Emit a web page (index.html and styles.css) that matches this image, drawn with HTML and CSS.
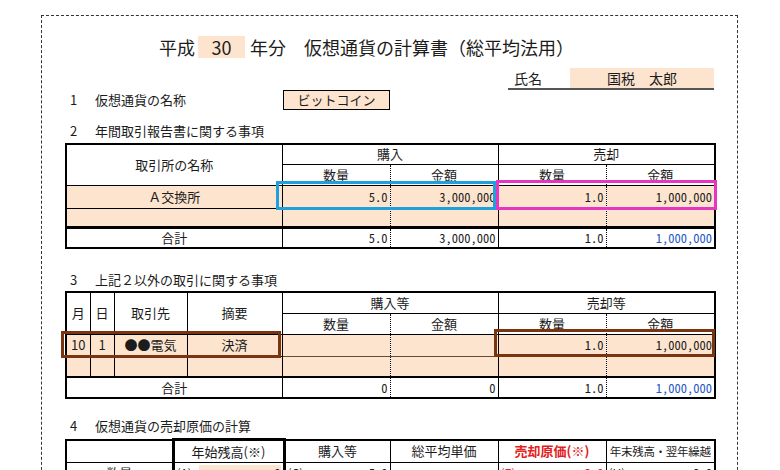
FILE: index.html
```html
<!DOCTYPE html>
<html lang="ja">
<head>
<meta charset="utf-8">
<title>仮想通貨の計算書</title>
<link rel="stylesheet" href="styles.css">
</head>
<body>
<div class="sheet">
  <h1 class="title"><span>平成</span><span class="yr">30</span><span>年分</span><span class="main">仮想通貨の計算書（総平均法用）</span></h1>

  <div class="name-row">
    <div class="name-box"><span class="name-label">氏名</span><span class="name-val">国税　太郎</span></div>
  </div>

  <div class="sec1"><span class="num">1</span><span>仮想通貨の名称</span><span class="coin">ビットコイン</span></div>

  <div class="sec-label s2"><span class="num">2</span><span>年間取引報告書に関する事項</span></div>
  <div class="tbl-wrap w2">
    <table class="grid t2">
      <colgroup><col class="c216"><col class="c108"><col class="c108"><col class="c108"><col class="c109"></colgroup>
      <tr class="h1"><th rowspan="2">取引所の名称</th><th colspan="2">購入</th><th colspan="2">売却</th></tr>
      <tr class="h2"><th class="qty">数量</th><th class="amt">金額</th><th class="qty">数量</th><th class="amt">金額</th></tr>
      <tr class="fill rd"><td>Ａ交換所</td><td class="n qty">5.0</td><td class="n amt">3,000,000</td><td class="n qty">1.0</td><td class="n amt">1,000,000</td></tr>
      <tr class="fill re"><td></td><td class="qty"></td><td class="amt"></td><td class="qty"></td><td class="amt"></td></tr>
      <tr class="rt"><td>合計</td><td class="n qty">5.0</td><td class="n amt">3,000,000</td><td class="n qty">1.0</td><td class="n amt blue">1,000,000</td></tr>
    </table>
    <div class="hl hl-blue"></div>
    <div class="hl hl-pink"></div>
  </div>

  <div class="sec-label s3"><span class="num">3</span><span>上記２以外の取引に関する事項</span></div>
  <div class="tbl-wrap w3">
    <table class="grid t3">
      <colgroup><col class="c24"><col class="c24"><col class="c73"><col class="c95"><col class="c108"><col class="c108"><col class="c108"><col class="c109"></colgroup>
      <tr class="h1"><th rowspan="2">月</th><th rowspan="2">日</th><th rowspan="2">取引先</th><th rowspan="2">摘要</th><th colspan="2">購入等</th><th colspan="2">売却等</th></tr>
      <tr class="h2"><th class="qty">数量</th><th class="amt">金額</th><th class="qty">数量</th><th class="amt">金額</th></tr>
      <tr class="fill rd"><td>10</td><td>1</td><td>●●電気</td><td>決済</td><td class="qty buy"></td><td class="amt buy"></td><td class="n qty">1.0</td><td class="n amt">1,000,000</td></tr>
      <tr class="fill re"><td></td><td></td><td></td><td></td><td class="qty"></td><td class="amt"></td><td class="qty"></td><td class="amt"></td></tr>
      <tr class="rt"><td colspan="4">合計</td><td class="n qty">0</td><td class="n amt">0</td><td class="n qty">1.0</td><td class="n amt blue">1,000,000</td></tr>
    </table>
    <div class="hl hl-brown-l"></div>
    <div class="hl hl-brown-r"></div>
  </div>

  <div class="sec-label s4"><span class="num">4</span><span>仮想通貨の売却原価の計算</span></div>
  <div class="tbl-wrap w4">
    <table class="grid t4">
      <colgroup><col class="c107"><col class="c111"><col class="c106"><col class="c108"><col class="c108"><col class="c109"></colgroup>
      <tr class="h1"><th></th><th class="box">年始残高(※)</th><th>購入等</th><th>総平均単価</th><th class="red">売却原価(※)</th><th class="tiny">年末残高・翌年繰越</th></tr>
      <tr class="r2">
        <td>数量</td>
        <td class="box"><div class="cf"><span class="lbl">(A)</span><span class="val pv">0</span></div></td>
        <td><div class="cf"><span class="lbl">(C)</span><span class="val">5.0</span></div></td>
        <td></td>
        <td><div class="cf redc"><span class="lbl">(E)</span><span class="val bold">3.0</span></div></td>
        <td><div class="cf"><span class="lbl">(H)</span><span class="val">3.0</span></div></td>
      </tr>
    </table>
  </div>
</div>
</body>
</html>
```

FILE: styles.css
```css
* { box-sizing: border-box; }
html, body { margin: 0; padding: 0; background: #fff; }
body {
  font-family: "Noto Sans CJK JP", "Noto Sans", sans-serif;
  color: #1c1c1c;
  font-size: 13px;
  overflow: hidden;
}
.sheet {
  margin: 15px 0 0 41px;
  width: 697px;
  height: 480px;
  border: 1px dashed #333;
  padding: 0 23px;
}
.title {
  margin: 20px 0 0;
  padding-left: 94px;
  height: 22px;
  display: flex;
  align-items: center;
  font-size: 18px;
  font-weight: 400;
  line-height: 22px;
}
.yr {
  width: 47px;
  height: 22px;
  background: #fce4cf;
  text-align: center;
  margin: 0 5px 0 3px;
}
.main { margin-left: 18px; }

.name-row { display: flex; justify-content: flex-end; margin-top: 10px; }
.name-box {
  display: flex;
  width: 206px;
  height: 22px;
  border-bottom: 2px solid #555;
  font-size: 14px;
  line-height: 20px;
}
.name-label { width: 62px; padding-left: 6px; }
.name-val { flex: 1; background: #fce4cf; text-align: center; height: 20px; }

.sec1 {
  display: grid;
  grid-template-columns: 30px 188px 107px;
  height: 20px;
  line-height: 20px;
  align-items: center;
}
.sec1 .num { padding-left: 5px; }
.coin {
  border: 1px solid #000;
  background: #fce4cf;
  text-align: center;
  height: 20px;
  line-height: 18px;
}

.sec-label { display: flex; height: 18px; line-height: 18px; padding-left: 5px; }
.sec-label .num { width: 25px; }
.s2 { margin-top: 12px; }
.s3 { margin-top: 22px; }
.s4 { margin-top: 18px; }

.tbl-wrap { position: relative; }
.w2 { margin-top: 3px; }
.w3 { margin-top: 2px; }
.w4 { margin-top: 3px; }

.grid {
  border-collapse: collapse;
  table-layout: fixed;
  width: 649px;
  border: 2px solid #000;
}
.grid th, .grid td {
  border: 1px solid #000;
  padding: 0 2px;
  font-weight: 400;
  text-align: center;
  font-size: 13px;
  line-height: 16px;
  white-space: nowrap;
  overflow: hidden;
}
.grid .n {
  text-align: right;
  font-family: "Noto Sans Mono CJK JP", "Liberation Mono", monospace;
  font-size: 12.5px;
}
.grid .qty { border-right: 1px dotted #000; }
.grid .amt { border-left: 1px dotted #000; }
.fill td { background: #fce4cf; }
.rt td { border-top: 3px solid #000; }
.t3 .rt td { border-top: 2px solid #000; }
.blue { color: #2358c4; font-weight: 700; }
.t3 .buy { border-bottom-color: #6b4a30; }

.c216 { width: 216px; }
.c108 { width: 108px; }
.c109 { width: 109px; }
.c24 { width: 24px; }
.c73 { width: 73px; }
.c95 { width: 95px; }
.c107 { width: 107px; }
.c111 { width: 111px; }
.c106 { width: 106px; }

.t2 .h1 { height: 20px; }
.t2 .h2 { height: 21px; }
.t2 .rd { height: 23px; }
.t2 .re { height: 19px; }
.t2 .rt { height: 21px; }

.t3 .h1 { height: 21px; }
.t3 .h2 { height: 21px; }
.t3 .rd { height: 22px; }
.t3 .re { height: 21px; }
.t3 .rt { height: 21px; }

.t4 .h1 { height: 23px; }
.t4 .r2 { height: 22px; }
.t4 .box { border-left: 3px solid #000; border-right: 3px solid #000; }
.t4 .h1 .box { border-top: 3px solid #000; }
.t4 .red { color: #e3201b; font-weight: 700; }
.t4 .tiny { font-size: 11.5px; padding: 0; letter-spacing: -0.3px; }
.cf { display: flex; align-items: center; }
.cf .lbl { width: 22px; text-align: left; font-size: 12px; }
.cf .val {
  flex: 1;
  text-align: right;
  font-family: "Noto Sans Mono CJK JP", "Liberation Mono", monospace;
  font-size: 12.5px;
}
.cf .pv { background: #fce4cf; }
.redc { color: #e3201b; }
.bold { font-weight: 700; }

.hl { position: absolute; border-style: solid; border-width: 3px; pointer-events: none; }
.hl-blue { left: 211px; top: 38px; width: 220px; height: 29px; border-color: #1ea0dc; }
.hl-pink { left: 431px; top: 37px; width: 221px; height: 30px; border-color: #e636c0; }
.hl-brown-l { left: -4px; top: 40px; width: 220px; height: 27px; border-color: #7a3510; }
.hl-brown-r { left: 429px; top: 38px; width: 221px; height: 28px; border-color: #7a3510; }
```
